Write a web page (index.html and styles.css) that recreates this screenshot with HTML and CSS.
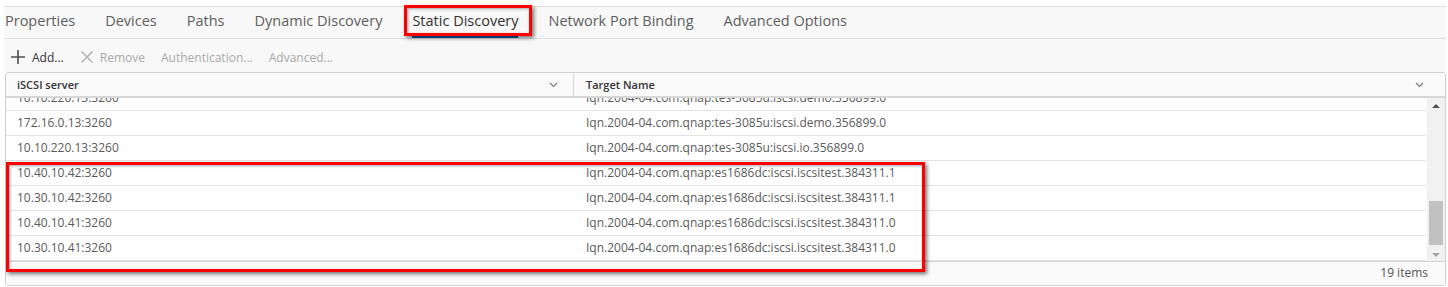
FILE: index.html
```html
<!DOCTYPE html>
<html lang="en">
<head>
<meta charset="utf-8">
<title>Static Discovery</title>
<link rel="stylesheet" href="styles.css">
</head>
<body>
<div class="page">
  <nav class="tabs">
    <span class="tab">Properties</span>
    <span class="tab">Devices</span>
    <span class="tab">Paths</span>
    <span class="tab">Dynamic Discovery</span>
    <span class="tab active">Static Discovery</span>
    <span class="tab">Network Port Binding</span>
    <span class="tab">Advanced Options</span>
  </nav>
  <div class="toolbar">
    <span class="tool enabled">
      <svg class="ico" width="16" height="16" viewBox="0 0 16 16"><path d="M8 1v14M1 8h14" stroke="#4d4d4d" stroke-width="1.6" fill="none"/></svg>
      Add...
    </span>
    <span class="tool disabled">
      <svg class="ico" width="14" height="14" viewBox="0 0 14 14"><path d="M1.5 1.5l11 11M12.5 1.5l-11 11" stroke="#b5b5b5" stroke-width="1.6" fill="none"/></svg>
      Remove
    </span>
    <span class="tool disabled">Authentication...</span>
    <span class="tool disabled">Advanced...</span>
  </div>
  <div class="grid">
    <div class="grid-head">
      <div class="hcol c1"><span>iSCSI server</span><svg class="chev" width="9" height="6" viewBox="0 0 9 6"><path d="M1 1l3.5 3.5L8 1" stroke="#777" stroke-width="1.1" fill="none"/></svg></div>
      <div class="hcol c2"><span>Target Name</span><svg class="chev" width="9" height="6" viewBox="0 0 9 6"><path d="M1 1l3.5 3.5L8 1" stroke="#777" stroke-width="1.1" fill="none"/></svg></div>
    </div>
    <div class="grid-body">
      <div class="viewport">
        <div class="rows">
          <div class="row"><span class="cell c1">10.10.220.13:3260</span><span class="cell c2">Iqn.2004-04.com.qnap:tes-3085u:iscsi.demo.356899.0</span></div>
          <div class="row"><span class="cell c1">172.16.0.13:3260</span><span class="cell c2">Iqn.2004-04.com.qnap:tes-3085u:iscsi.demo.356899.0</span></div>
          <div class="row"><span class="cell c1">10.10.220.13:3260</span><span class="cell c2">Iqn.2004-04.com.qnap:tes-3085u:iscsi.io.356899.0</span></div>
          <div class="row"><span class="cell c1">10.40.10.42:3260</span><span class="cell c2">Iqn.2004-04.com.qnap:es1686dc:iscsi.iscsitest.384311.1</span></div>
          <div class="row"><span class="cell c1">10.30.10.42:3260</span><span class="cell c2">Iqn.2004-04.com.qnap:es1686dc:iscsi.iscsitest.384311.1</span></div>
          <div class="row"><span class="cell c1">10.40.10.41:3260</span><span class="cell c2">Iqn.2004-04.com.qnap:es1686dc:iscsi.iscsitest.384311.0</span></div>
          <div class="row"><span class="cell c1">10.30.10.41:3260</span><span class="cell c2">Iqn.2004-04.com.qnap:es1686dc:iscsi.iscsitest.384311.0</span></div>
        </div>
      </div>
      <div class="scrollbar">
        <span class="arrow up"></span>
        <span class="track"><span class="thumb"></span></span>
        <span class="arrow down"></span>
      </div>
    </div>
    <div class="grid-foot">19 items</div>
  </div>
  <div class="mark mark-tab"></div>
  <div class="mark mark-rows"></div>
</div>
</body>
</html>
```
FILE: styles.css
```css
* { box-sizing: border-box; }
html, body { margin: 0; padding: 0; background: #fff; }
body { font-family: "Open Sans", "Noto Sans", sans-serif; color: #565656; }

.page {
  position: relative;
  margin: 6px 2px 0 4px;
  width: 1442px;
}

.tabs {
  display: flex;
  gap: 30px;
  height: 33px;
  padding-left: 1px;
  background: #f8f8f8;
  border-top: 1px solid #dedede;
  border-bottom: 1px solid #dedede;
}
.tab {
  height: 31px;
  padding-top: 4px;
  font-size: 14.5px;
  line-height: 20px;
  color: #5e5e5e;
  border-bottom: 2px solid transparent;
}
.tab.active {
  color: #313131;
  border-bottom-color: #0b5ea8;
}

.toolbar {
  display: flex;
  align-items: center;
  height: 33px;
  padding-left: 6px;
  padding-top: 3px;
  background: #f8f8f8;
  font-size: 12px;
}
.tool {
  display: flex;
  align-items: center;
  gap: 6px;
  margin-right: 16px;
}
.tool.enabled { color: #333; }
.tool.disabled { color: #a9a9a9; }
.ico { display: block; }

.grid {
  border: 1px solid #cfcfcf;
  border-radius: 3px;
  margin-left: 1px;
  overflow: hidden;
}
.grid-head {
  display: flex;
  height: 25px;
  background: #fafafa;
  border-bottom: 2px solid #d7d7d7;
  font-size: 11px;
  font-weight: 600;
  color: #333;
}
.hcol {
  display: flex;
  align-items: center;
  justify-content: space-between;
  padding: 0 15px 0 11px;
}
.hcol.c1 { width: 568px; border-right: 1px solid #d7d7d7; }
.hcol.c2 { flex: 1; padding-left: 12px; padding-right: 21px; }
.chev { display: block; }

.grid-body {
  display: flex;
  height: 163px;
  background: #fff;
}
.viewport {
  flex: 1;
  overflow: hidden;
}
.rows { margin-top: -12px; }
.row {
  display: flex;
  height: 25px;
  align-items: center;
  border-bottom: 1px solid #e3e3e3;
  font-size: 12px;
  color: #5a5a5a;
  padding-bottom: 1px;
}
.cell.c1 { width: 569px; padding-left: 11px; }
.cell.c2 { padding-left: 11px; }

.scrollbar {
  width: 18px;
  background: #f1f1f1;
  display: flex;
  flex-direction: column;
  align-items: center;
  padding: 6px 0 4px 0;
  margin-left: 1px;
}
.arrow {
  width: 0; height: 0;
  border-left: 4px solid transparent;
  border-right: 4px solid transparent;
}
.arrow.up { border-bottom: 4px solid #505050; }
.arrow.down { border-top: 4px solid #a3a3a3; }
.track {
  flex: 1;
  width: 100%;
  display: flex;
  flex-direction: column;
  justify-content: flex-end;
  padding: 0 2px 8px 2px;
}
.thumb {
  display: block;
  height: 44px;
  background: #c1c1c1;
}

.grid-foot {
  height: 24px;
  border-top: 1px solid #d2d2d2;
  background: #fafafa;
  font-size: 12px;
  line-height: 22px;
  text-align: right;
  padding-right: 17px;
  color: #565656;
}

.mark {
  position: absolute;
  border: 3px solid #ff0000;
  box-shadow: 2px 2px 4px rgba(0,0,0,0.55), inset 1px 1px 3px rgba(0,0,0,0.35);
  pointer-events: none;
}
.mark-tab { left: 400px; top: -1px; width: 128px; height: 31px; }
.mark-rows { left: 2px; top: 156px; width: 919px; height: 110px; }
```
